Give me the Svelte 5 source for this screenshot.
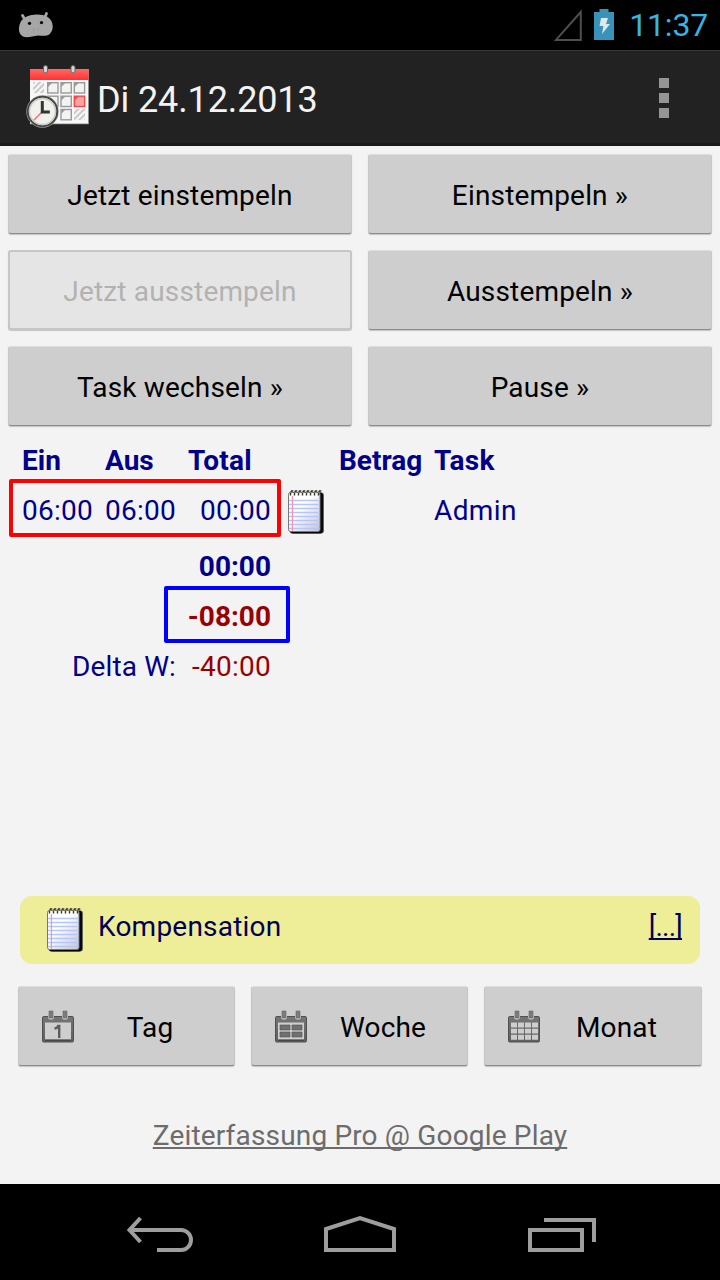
<script>
  const actions = [
    { label: 'Jetzt einstempeln' },
    { label: 'Einstempeln »' },
    { label: 'Jetzt ausstempeln', disabled: true },
    { label: 'Ausstempeln »' },
    { label: 'Task wechseln »' },
    { label: 'Pause »' }
  ];
  const views = [
    { label: 'Tag', kind: 'day' },
    { label: 'Woche', kind: 'week' },
    { label: 'Monat', kind: 'month' }
  ];
  const rings = [0, 1, 2, 3, 4, 5, 6, 7];
</script>

{#snippet notepad()}
  <svg class="notepad" width="38" height="46" viewBox="0 0 38 46">
    <defs>
      <linearGradient id="paper" x1="0" y1="0" x2="1" y2="1">
        <stop offset="0.4" stop-color="#fff" />
        <stop offset="1" stop-color="#c4c4c8" />
      </linearGradient>
    </defs>
    <rect x="2.5" y="3.5" width="34.5" height="41" rx="3" fill="#666" />
    <rect x="3" y="3.5" width="33" height="41" rx="3" fill="#080808" />
    <rect x="1.5" y="3.5" width="31.5" height="39" rx="2" fill="url(#paper)" stroke="#777" stroke-width="1" />
    <path d="M2 11.5H32.5M2 15.5H32.5M2 19.5H32.5M2 23.5H32.5M2 27.5H32.5M2 31.5H32.5M2 35.5H32.5M2 39.5H32.5" stroke="#b4c5ff" stroke-width="1.3" />
    <path d="M5.4 7V42" stroke="#ff8fae" stroke-width="1.2" />
    {#each rings as n}
      <path d="M{3.5 + n * 4} 6.5V4l1-2h1.8" fill="none" stroke="#333328" stroke-width="1.4" />
    {/each}
    <path d="M3 3.6H34" stroke="#9c9c80" stroke-width="0.8" stroke-dasharray="2 2" />
  </svg>
{/snippet}

{#snippet calendar(kind)}
  <svg class="cal" width="34" height="34" viewBox="0 0 34 34">
    <defs>
      <linearGradient id="frame" x1="0" y1="0" x2="0" y2="1">
        <stop offset="0" stop-color="#757575" /><stop offset="1" stop-color="#606060" />
      </linearGradient>
    </defs>
    <rect x="1.5" y="6.5" width="31" height="25.5" rx="1.2" fill="url(#frame)" stroke="#505050" />
    <path d="M7 4.5h6v3.5l-1.5 1.5h-3L7 8zM21 4.5h6v3.5l-1.5 1.5h-3L21 8z" fill="#cecece" />
    <path d="M8 1h4v7H8zM22 1h4v7h-4z" fill="#7c7c7c" stroke="#656565" stroke-width="0.6" />
    {#if kind === 'day'}
      <rect x="4" y="12.5" width="26" height="17" fill="#cecece" />
      <path d="M4 30.2h26" stroke="#3c3c3c" stroke-width="1" />
      <path d="M13.5 18.5c2.5-.3 3.2-1.2 3.7-2.5h1v12" fill="none" stroke="#5c5c5c" stroke-width="2.4" />
    {:else if kind === 'week'}
      <rect x="4" y="12.5" width="26" height="17" fill="#cecece" />
      <path d="M4 30.2h26" stroke="#3c3c3c" />
      <path d="M6 15h10v5H6zM18 15h10v5H18zM6 22h10v5H6zM18 22h10v5H18z" fill="#707070" stroke="#505050" stroke-width="0.6" />
    {:else}
      <path d="M4 12.5h6v5H4zM11 12.5h6v5H11zM18 12.5h6v5H18zM25 12.5h6v5H25zM4 18.7h6v4.8H4zM11 18.7h6v4.8H11zM18 18.7h6v4.8H18zM25 18.7h6v4.8H25zM4 24.7h6v5H4zM11 24.7h6v5H11zM18 24.7h6v5H18zM25 24.7h6v5H25z" fill="#cecece" />
    {/if}
  </svg>
{/snippet}

<div class="phone">
  <header class="status">
    <svg class="droid" width="36" height="28" viewBox="0 0 36 28">
      <path d="M4.5 4.5l3 5M28.5 2.5l-2.5 6" stroke="#a6a6a6" stroke-width="2.8" stroke-linecap="round" />
      <path d="M7 6.5C12 2.8 24 2.5 29 5.5C35 9 36.5 17 32.5 22C30 25.5 26 25 20 24.5C15 25 9 27.5 5 25.5C.5 23 .5 18 1.5 14C2.5 10 4 8.4 7 6.5Z" fill="#a6a6a6" />
      <circle cx="11.5" cy="12.3" r="1.6" /><circle cx="23.5" cy="11.6" r="1.6" />
      <path d="M15.8 17v3M20 17v2" stroke="#909090" stroke-width="0.8" />
    </svg>
    <div class="signals">
      <svg width="28" height="32" viewBox="0 0 28 32"><path d="M2 30.9L26.8 3V30.9Z" fill="none" stroke="#4e4e4e" stroke-width="2" /></svg>
      <svg class="battery" width="20" height="32" viewBox="0 0 20 32">
        <path d="M5.5 0h9v3H20v28H0V3h5.5z" fill="#3993b9" />
        <path d="M7 9h7l-2 6h4L8 25l1.4-8H5.5z" fill="#dce9ef" />
      </svg>
      <span class="clock">11:37</span>
    </div>
  </header>

  <div class="actionbar">
    <svg class="logo" width="64" height="64" viewBox="0 0 64 64">
      <defs>
        <linearGradient id="red" x1="0" y1="0" x2="0" y2="1"><stop offset="0" stop-color="#ff6a66" /><stop offset="1" stop-color="#f33" /></linearGradient>
        <pattern id="hatch" width="4.2" height="4.2" patternUnits="userSpaceOnUse" patternTransform="rotate(45)"><path d="M1 0V4.2" stroke="#c6c6c6" stroke-width="2" /></pattern>
      </defs>
      <rect x="4" y="4" width="58.5" height="55" fill="#f7f7f7" />
      <path d="M4 58.7h58.5" stroke="#bbb" />
      <rect x="4" y="4" width="58.5" height="11" fill="url(#red)" />
      <path d="M7 17h11v11H7zM48 44h11v11H48z" fill="url(#hatch)" />
      <g fill="#f3f3f3" stroke="#999" stroke-width="1.4">
        <rect x="21.7" y="17.7" width="10.3" height="10.3" /><rect x="35" y="17.7" width="10.3" height="10.3" /><rect x="48.3" y="17.7" width="10.3" height="10.3" />
        <rect x="21.7" y="31.2" width="10.3" height="10.3" /><rect x="35" y="31.2" width="10.3" height="10.3" /><rect x="35" y="44.5" width="10.3" height="10.3" />
        <rect x="48.3" y="31.2" width="10.3" height="10.3" fill="#f5a5a5" stroke="#f44" />
      </g>
      <path d="M22 18h4l-4 4zM35.3 18h4l-4 4zM48.6 18h4l-4 4zM35.3 31.5h4l-4 4zM35.3 44.8h4l-4 4z" fill="#999" />
      <path d="M48.6 31.5h4l-4 4z" fill="#f44" />
      <path d="M17.5 2.5a2 2 0 014 0V6a2 2 0 01-4 0zM45 2.5a2 2 0 014 0V6a2 2 0 01-4 0z" fill="#d5d5d5" stroke="#666" />
      <circle cx="16.5" cy="46.5" r="16.2" fill="#a9a9a5" />
      <circle cx="16.5" cy="46.5" r="14.7" fill="#f0f0ec" stroke="#464646" stroke-width="2" />
      <circle cx="16.5" cy="46.5" r="13" fill="none" stroke="#c9c9bf" stroke-width="1.4" />
      <path d="M16 47L8 55" stroke="#f66" stroke-width="1.5" />
      <path d="M16.3 36v11h7.5" fill="none" stroke="#333" stroke-width="3" />
    </svg>
    <h1>Di 24.12.2013</h1>
    <div class="overflow"><i></i><i></i><i></i></div>
  </div>

  <main>
    <div class="actions">
      {#each actions as a}
        <button class="btn" disabled={a.disabled}>{a.label}</button>
      {/each}
    </div>

    <section class="times">
      <b>Ein</b><b>Aus</b><b class="total">Total</b><span></span><b>Betrag</b><b class="total">Task</b>
      <span class="num">06:00</span><span class="num">06:00</span><span class="num right">00:00</span>{@render notepad()}<span></span><span class="task">Admin</span>
      <b class="sum">00:00</b>
      <b class="sum neg">-08:00</b>
      <span class="delta">Delta W:</span><span class="right num neg">-40:00</span>
      <div class="mark red"></div>
      <div class="mark blue"></div>
    </section>

    <section class="note">
      {@render notepad()}
      <span class="text">Kompensation</span>
      <span class="more">[...]</span>
    </section>

    <div class="views">
      {#each views as v}
        <button class="btn view">{@render calendar(v.kind)}<span>{v.label}</span></button>
      {/each}
    </div>

    <div class="promo"><span>Zeiterfassung Pro @ Google Play</span></div>
  </main>

  <nav>
    <svg width="72" height="40" viewBox="0 0 72 40"><path d="M6 16H57A10 10 0 0157 36H33" fill="none" stroke="#9e9e9e" stroke-width="4" /><path d="M16.5 4L5.5 16L16.5 28" fill="none" stroke="#9e9e9e" stroke-width="4" /></svg>
    <svg width="72" height="40" viewBox="0 0 72 40"><path d="M2 36V15L36 4L70 15V36Z" fill="none" stroke="#9e9e9e" stroke-width="4" /></svg>
    <svg width="72" height="40" viewBox="0 0 72 40"><path d="M6 16H58V36H6ZM20 6H70V28" fill="none" stroke="#9e9e9e" stroke-width="4" /></svg>
  </nav>
</div>

<style>
  :global(body) { margin: 0; background: #f3f3f3; }
  .phone { width: 720px; height: 1280px; display: flex; flex-direction: column; font-family: Roboto, sans-serif; font-size: 28px; background: #f3f3f3; overflow: hidden; }
  svg { display: block; flex: none; }
  .status { height: 50px; background: #000; display: flex; justify-content: space-between; box-sizing: border-box; padding: 11px 12px 0 18px; }
  .signals { display: flex; margin-top: -2px; }
  .battery { margin-left: 12px; }
  .clock { color: #33b5e5; font-size: 32px; line-height: 33px; margin-left: 15px; letter-spacing: -0.2px; }
  .actionbar { height: 96px; box-sizing: border-box; border-top: 1px solid #363636; border-bottom: 3px solid #1b1b1b; background: #222; display: flex; align-items: center; padding: 0 51px 0 26px; }
  h1 { margin: 0 0 0 7px; padding-top: 6px; font-size: 36px; font-weight: 400; color: #f3f3f3; flex: 1; letter-spacing: -0.12px; }
  .overflow { display: grid; gap: 5px; padding-top: 2px; }
  .overflow i { width: 10px; height: 10px; background: #959595; }
  main { height: 1038px; display: flex; flex-direction: column; }
  .actions { display: grid; grid-template-columns: 1fr 1fr; gap: 16px; padding: 8px 8px 0; }
  .btn { height: 80px; box-sizing: border-box; padding: 3px 0 0; border: 1px solid #c6c6c6; border-top-color: #dcdcdc; border-bottom: 1px solid #8c8c8c; border-radius: 3px; background: #cecece; font: inherit; letter-spacing: 0.17px; color: #000; box-shadow: 0 1px 1px #c4c4c4; }
  .btn:disabled { color: #b2b2b2; background: #e5e5e5; border: 2px solid #c6c6c6; }
  .times { position: relative; display: grid; grid-template-columns: 83px 83px 83px 68px 95px 1fr; grid-template-rows: 50px 56px 50px 50px 50px; line-height: 50px; padding-left: 22px; margin-top: 10px; color: #00008b; }
  .right { text-align: right; }
  .num, .total { letter-spacing: 0.25px; }
  .task { letter-spacing: 0.4px; }
  .times .notepad { margin: 3px 0 0 16px; }
  .sum { grid-column: 1 / 4; text-align: right; }
  .delta { grid-column: 1 / 3; text-align: right; padding-right: 12px; letter-spacing: 0.12px; }
  .times .neg { color: #990000; }
  .mark { position: absolute; box-sizing: border-box; border: 4px solid; border-radius: 2px; }
  .red { left: 9px; top: 43px; width: 272px; height: 58px; border-color: #f00; }
  .blue { left: 164px; top: 150px; width: 126px; height: 57px; border-color: #00f; }
  .note { height: 68px; box-sizing: border-box; margin: auto 20px 22px; border-radius: 12px; background: #eeee99; display: flex; padding: 11px 18px 0 26px; color: #000058; line-height: 40px; }
  .note .text { flex: 1; margin-left: 14px; letter-spacing: 0.22px; }
  .more { text-decoration: underline; text-decoration-skip-ink: none; letter-spacing: -0.75px; }
  .views { display: grid; grid-template-columns: 217px 217px 218px; gap: 16px; padding: 0 18px; }
  .view { display: flex; align-items: center; padding: 2px 22px 0; }
  .view svg { margin-top: -1px; }
  .view span { flex: 1; text-align: center; padding: 1px 0 0 13px; }
  .promo { height: 118px; box-sizing: border-box; padding-top: 50px; line-height: 40px; text-align: center; color: #6c6c6c; letter-spacing: 0.17px; }
  .promo span { text-decoration: underline; text-decoration-skip-ink: none; }
  nav { height: 96px; background: #000; display: flex; justify-content: space-between; padding: 30px 124px 0; box-sizing: border-box; }
</style>
